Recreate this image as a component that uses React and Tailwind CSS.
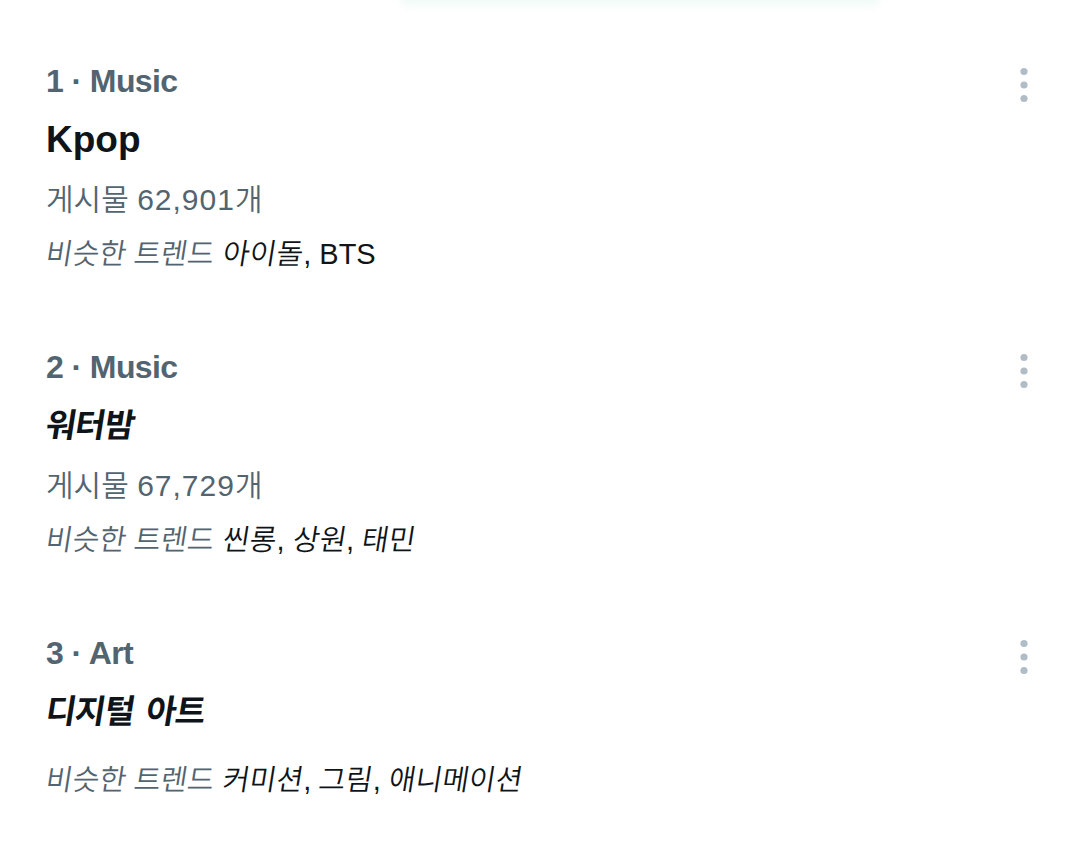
import React from 'react';

const trends = [
  { rank: 1, category: 'Music', title: 'Kpop', titleKo: false, posts: '62,901', related: ['아이돌', 'BTS'] },
  { rank: 2, category: 'Music', title: '워터밤', titleKo: true, posts: '67,729', related: ['씬롱', '상원', '태민'] },
  { rank: 3, category: 'Art', title: '디지털 아트', titleKo: true, posts: null, related: ['커미션', '그림', '애니메이션'] },
];

const isKorean = (s) => /[\uac00-\ud7a3]/.test(s);

// Hangul here is drawn with a light lean
const Slant = ({ children }) => (
  <span className="inline-block -skew-x-[9deg]">{children}</span>
);

const MoreIcon = () => (
  <svg width="20" height="40" viewBox="0 0 20 40" className="mt-[7px] shrink-0">
    <circle cx="10" cy="6.5" r="3.6" fill="#b1bdc6" />
    <circle cx="10" cy="20" r="3.6" fill="#b1bdc6" />
    <circle cx="10" cy="33.5" r="3.6" fill="#b1bdc6" />
  </svg>
);

const TrendItem = ({ item }) => (
  <div className="flex flex-col mb-[56px]">
    {/* rank and category */}
    <div className="h-[58px] flex items-center justify-between">
      <span className="text-[32px] font-bold text-[#536471] tracking-[-0.6px]">
        {item.rank} · {item.category}
      </span>
      <MoreIcon />
    </div>

    {/* trend name */}
    <div className="h-[60px] flex items-center">
      {item.titleKo ? (
        <span className="text-[33px] font-bold text-[#0f1419] tracking-[-1px] [word-spacing:4px]">
          <Slant>{item.title}</Slant>
        </span>
      ) : (
        <span className="text-[37px] font-bold text-[#0f1419]">{item.title}</span>
      )}
    </div>

    {item.posts && (
      <div className="h-[58px] flex items-center text-[30px] font-[350] text-[#536471] whitespace-pre">
        게시물 <span className="tracking-[1px]">{item.posts}</span>개
      </div>
    )}

    <div className={`h-[54px] flex items-center text-[29px] font-[350] whitespace-pre ${item.posts ? '' : 'mt-[12px]'}`}>
      <span className="text-[#536471] mr-[9px]">
        <Slant>비슷한 트렌드</Slant>
      </span>
      <span className="text-[#0f1419]">
        {item.related.map((r, i) => (
          <span key={i}>
            {isKorean(r) ? <Slant>{r}</Slant> : r}
            {i < item.related.length - 1 && ', '}
          </span>
        ))}
      </span>
    </div>
  </div>
);

export default function App() {
  return (
    <div
      className="relative w-[1080px] h-[852px] overflow-hidden bg-white"
      style={{ fontFamily: '"Liberation Sans", "Noto Sans CJK KR", sans-serif' }}
    >
      <div className="absolute top-[-8px] left-[400px] w-[480px] h-[14px] rounded-full bg-[#f1fbf8] blur-[4px]" />

      <div className="pt-[52px] pl-[46px] pr-[46px]">
        {trends.map((t) => (
          <TrendItem key={t.rank} item={t} />
        ))}
      </div>
    </div>
  );
}
